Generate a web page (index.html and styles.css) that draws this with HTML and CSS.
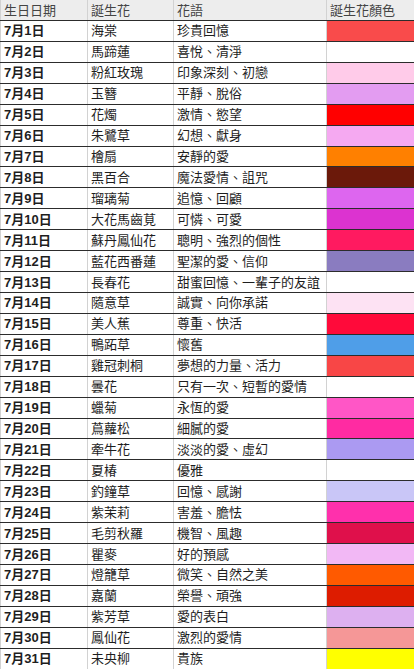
FILE: index.html
```html
<!DOCTYPE html>
<html lang="zh-Hant">
<head>
<meta charset="utf-8">
<title>7月誕生花</title>
<link rel="stylesheet" href="styles.css">
</head>
<body>
<div class="sheet">
  <div class="row head">
    <div class="cell">生日日期</div>
    <div class="cell">誕生花</div>
    <div class="cell">花語</div>
    <div class="cell">誕生花顏色</div>
  </div>
  <div class="row"><div class="cell date">7月1日</div><div class="cell">海棠</div><div class="cell">珍貴回憶</div><div class="cell swatch" style="background:#f94b4b"></div></div>
  <div class="row"><div class="cell date">7月2日</div><div class="cell">馬蹄蓮</div><div class="cell">喜悅、清淨</div><div class="cell swatch" style="background:#ffffff"></div></div>
  <div class="row"><div class="cell date">7月3日</div><div class="cell">粉紅玫瑰</div><div class="cell">印象深刻、初戀</div><div class="cell swatch" style="background:#ffcbe9"></div></div>
  <div class="row"><div class="cell date">7月4日</div><div class="cell">玉簪</div><div class="cell">平靜、脫俗</div><div class="cell swatch" style="background:#e39cf1"></div></div>
  <div class="row"><div class="cell date">7月5日</div><div class="cell">花燭</div><div class="cell">激情、慾望</div><div class="cell swatch" style="background:#ff0000"></div></div>
  <div class="row"><div class="cell date">7月6日</div><div class="cell">朱鷺草</div><div class="cell">幻想、獻身</div><div class="cell swatch" style="background:#f5a9f1"></div></div>
  <div class="row"><div class="cell date">7月7日</div><div class="cell">檜扇</div><div class="cell">安靜的愛</div><div class="cell swatch" style="background:#ff8000"></div></div>
  <div class="row"><div class="cell date">7月8日</div><div class="cell">黑百合</div><div class="cell">魔法愛情、詛咒</div><div class="cell swatch" style="background:#6b190a"></div></div>
  <div class="row"><div class="cell date">7月9日</div><div class="cell">瑠璃菊</div><div class="cell">追憶、回顧</div><div class="cell swatch" style="background:#dd66ef"></div></div>
  <div class="row"><div class="cell date">7月10日</div><div class="cell">大花馬齒莧</div><div class="cell">可憐、可愛</div><div class="cell swatch" style="background:#dc33d0"></div></div>
  <div class="row"><div class="cell date">7月11日</div><div class="cell">蘇丹鳳仙花</div><div class="cell">聰明、強烈的個性</div><div class="cell swatch" style="background:#ff1a60"></div></div>
  <div class="row"><div class="cell date">7月12日</div><div class="cell">藍花西番蓮</div><div class="cell">聖潔的愛、信仰</div><div class="cell swatch" style="background:#8a7cc0"></div></div>
  <div class="row"><div class="cell date">7月13日</div><div class="cell">長春花</div><div class="cell">甜蜜回憶、一輩子的友誼</div><div class="cell swatch" style="background:#ffffff"></div></div>
  <div class="row"><div class="cell date">7月14日</div><div class="cell">隨意草</div><div class="cell">誠實、向你承諾</div><div class="cell swatch" style="background:#fde2f3"></div></div>
  <div class="row"><div class="cell date">7月15日</div><div class="cell">美人蕉</div><div class="cell">尊重、快活</div><div class="cell swatch" style="background:#ff0a3a"></div></div>
  <div class="row"><div class="cell date">7月16日</div><div class="cell">鴨跖草</div><div class="cell">懷舊</div><div class="cell swatch" style="background:#4f9ee8"></div></div>
  <div class="row"><div class="cell date">7月17日</div><div class="cell">雞冠刺桐</div><div class="cell">夢想的力量、活力</div><div class="cell swatch" style="background:#f84646"></div></div>
  <div class="row"><div class="cell date">7月18日</div><div class="cell">曇花</div><div class="cell">只有一次、短暫的愛情</div><div class="cell swatch" style="background:#ffffff"></div></div>
  <div class="row"><div class="cell date">7月19日</div><div class="cell">蠟菊</div><div class="cell">永恆的愛</div><div class="cell swatch" style="background:#ff56c6"></div></div>
  <div class="row"><div class="cell date">7月20日</div><div class="cell">蔦蘿松</div><div class="cell">細膩的愛</div><div class="cell swatch" style="background:#ff2ba2"></div></div>
  <div class="row"><div class="cell date">7月21日</div><div class="cell">牽牛花</div><div class="cell">淡淡的愛、虛幻</div><div class="cell swatch" style="background:#ab9af2"></div></div>
  <div class="row"><div class="cell date">7月22日</div><div class="cell">夏椿</div><div class="cell">優雅</div><div class="cell swatch" style="background:#ffffff"></div></div>
  <div class="row"><div class="cell date">7月23日</div><div class="cell">釣鐘草</div><div class="cell">回憶、感謝</div><div class="cell swatch" style="background:#c9c6f7"></div></div>
  <div class="row"><div class="cell date">7月24日</div><div class="cell">紫茉莉</div><div class="cell">害羞、膽怯</div><div class="cell swatch" style="background:#ff30ac"></div></div>
  <div class="row"><div class="cell date">7月25日</div><div class="cell">毛剪秋羅</div><div class="cell">機智、風趣</div><div class="cell swatch" style="background:#df104b"></div></div>
  <div class="row"><div class="cell date">7月26日</div><div class="cell">瞿麥</div><div class="cell">好的預感</div><div class="cell swatch" style="background:#f2b8f5"></div></div>
  <div class="row"><div class="cell date">7月27日</div><div class="cell">燈籠草</div><div class="cell">微笑、自然之美</div><div class="cell swatch" style="background:#ff5a00"></div></div>
  <div class="row"><div class="cell date">7月28日</div><div class="cell">嘉蘭</div><div class="cell">榮譽、頑強</div><div class="cell swatch" style="background:#dd1c00"></div></div>
  <div class="row"><div class="cell date">7月29日</div><div class="cell">紫芳草</div><div class="cell">愛的表白</div><div class="cell swatch" style="background:#ddb0f0"></div></div>
  <div class="row"><div class="cell date">7月30日</div><div class="cell">鳳仙花</div><div class="cell">激烈的愛情</div><div class="cell swatch" style="background:#f59797"></div></div>
  <div class="row"><div class="cell date">7月31日</div><div class="cell">未央柳</div><div class="cell">貴族</div><div class="cell swatch" style="background:#ffff00"></div></div>
</div>
</body>
</html>
```
FILE: styles.css
```css
html, body {
  margin: 0;
  padding: 0;
  background: #ffffff;
}

body {
  font-family: "Liberation Sans", "Noto Sans CJK TC", sans-serif;
  font-size: 13px;
  color: #1e1e1e;
}

.sheet {
  width: 414px;
  overflow: hidden;
}

.row {
  display: grid;
  grid-template-columns: 87px 86px 153px 88px;
  height: 20.93px;
  box-sizing: border-box;
  border-top: 1px solid #2c2c2c;
}

.row.head {
  height: 20px;
  border-top: none;
  background: #ededed;
  color: #444444;
}

.cell {
  box-sizing: border-box;
  border-left: 1px solid #d2d2d2;
  padding-left: 3px;
  display: flex;
  align-items: center;
  white-space: nowrap;
  overflow: hidden;
  line-height: 1;
}

.date {
  font-weight: bold;
}

.swatch {
  padding: 0;
}
```
